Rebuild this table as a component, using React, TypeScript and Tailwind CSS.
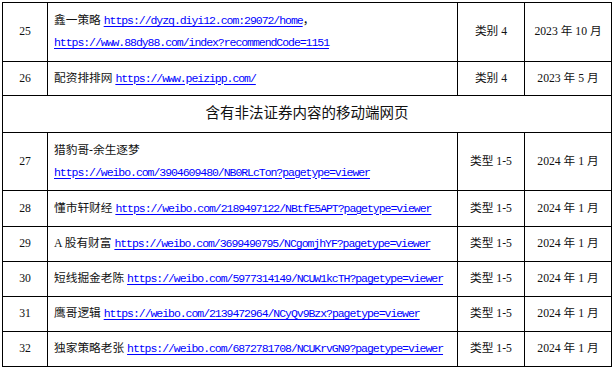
const serif = "font-['Liberation_Serif','Noto_Sans_CJK_SC',serif]";

type Row = {
  no: string;
  name: string;
  url: string;
  extra?: string;
  breakAfterName?: boolean;
  kind: string;
  date: string;
};

const top: Row[] = [
  {
    no: "25",
    name: "鑫一策略",
    url: "https://dyzq.diyi12.com:29072/home",
    extra: "https://www.88dy88.com/index?recommendCode=1151",
    kind: "类别 4",
    date: "2023 年 10 月",
  },
  { no: "26", name: "配资排排网", url: "https://www.peizipp.com/", kind: "类别 4", date: "2023 年 5 月" },
];

const mobile: Row[] = [
  {
    no: "27",
    name: "猎豹哥-余生逐梦",
    url: "https://weibo.com/3904609480/NB0RLcTon?pagetype=viewer",
    breakAfterName: true,
    kind: "类型 1-5",
    date: "2024 年 1 月",
  },
  { no: "28", name: "懂市轩财经", url: "https://weibo.com/2189497122/NBtfE5APT?pagetype=viewer", kind: "类型 1-5", date: "2024 年 1 月" },
  { no: "29", name: "A 股有财富", url: "https://weibo.com/3699490795/NCgomjhYF?pagetype=viewer", kind: "类型 1-5", date: "2024 年 1 月" },
  { no: "30", name: "短线掘金老陈", url: "https://weibo.com/5977314149/NCUW1kcTH?pagetype=viewer", kind: "类型 1-5", date: "2024 年 1 月" },
  { no: "31", name: "鹰哥逻辑", url: "https://weibo.com/2139472964/NCyQv9Bzx?pagetype=viewer", kind: "类型 1-5", date: "2024 年 1 月" },
  { no: "32", name: "独家策略老张", url: "https://weibo.com/6872781708/NCUKrvGN9?pagetype=viewer", kind: "类型 1-5", date: "2024 年 1 月" },
];

function Link({ href }: { href: string }) {
  return (
    <a
      href={href}
      className="font-['Liberation_Mono',monospace] text-[11.5px] tracking-[-1.05px] text-[#0000ff] underline underline-offset-2"
    >
      {href}
    </a>
  );
}

function TableRow({ row, h }: { row: Row; h: string }) {
  const twoLines = row.extra || row.breakAfterName;
  return (
    <tr className={h}>
      <td className="border border-black text-center">{row.no}</td>
      <td className={`border border-black px-[6px] ${twoLines ? "leading-[22px]" : ""}`}>
        {row.name}
        {row.breakAfterName ? <br /> : " "}
        <Link href={row.url} />
        {row.extra && (
          <>
            ，<br />
            <Link href={row.extra} />
          </>
        )}
      </td>
      <td className="border border-black text-center">{row.kind}</td>
      <td className="border border-black text-center">{row.date}</td>
    </tr>
  );
}

export default function App() {
  return (
    <div className="w-[613px] h-[369px] bg-white pl-[2px] pt-[2px]">
      <table className={`table-fixed border-collapse w-[609px] text-[11.7px] text-[#111] ${serif}`}>
        <colgroup>
          <col className="w-[45px]" />
          <col className="w-[410px]" />
          <col className="w-[67px]" />
          <col className="w-[87px]" />
        </colgroup>
        <tbody>
          <TableRow row={top[0]} h="h-[59px]" />
          <TableRow row={top[1]} h="h-[34px]" />
          <tr className="h-[37px]">
            <td colSpan={4} className="border border-black text-center text-[14.5px]">
              含有非法证券内容的移动端网页
            </td>
          </tr>
          {mobile.map((r, i) => (
            <TableRow key={r.no} row={r} h={i === 0 ? "h-[58px]" : i === 1 ? "h-[36px]" : "h-[35px]"} />
          ))}
        </tbody>
      </table>
    </div>
  );
}
